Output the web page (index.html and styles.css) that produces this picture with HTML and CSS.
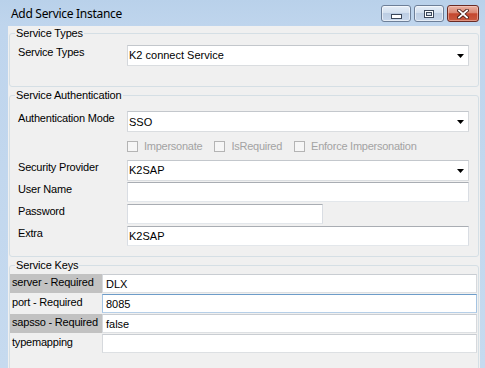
FILE: index.html
```html
<!DOCTYPE html>
<html>
<head>
<meta charset="utf-8">
<title>Add Service Instance</title>
<link rel="stylesheet" href="styles.css">
</head>
<body>
<div class="window">
  <div class="titlebar">
    <span class="title">Add Service Instance</span>
    <div class="caption-buttons">
      <span class="cbtn minbtn">
        <svg width="11" height="5" viewBox="0 0 11 5"><rect x="0.5" y="0.5" width="10" height="4" fill="#fff" stroke="#3b475a"/></svg>
      </span>
      <span class="cbtn maxbtn">
        <svg width="10" height="8" viewBox="0 0 10 8"><rect x="0.5" y="0.5" width="9" height="7" fill="#fff" stroke="#3b475a"/><rect x="2.5" y="2.5" width="5" height="3" fill="#d4dfec" stroke="#3b475a"/></svg>
      </span>
      <span class="cbtn closebtn">
        <svg width="12" height="10" viewBox="0 0 12 10"><path d="M2 1.5 L10 8.5 M10 1.5 L2 8.5" stroke="#4a1c16" stroke-width="3.6" stroke-linecap="square"/><path d="M2 1.5 L10 8.5 M10 1.5 L2 8.5" stroke="#fff" stroke-width="1.8" stroke-linecap="square"/></svg>
      </span>
    </div>
  </div>
  <div class="client">
    <fieldset class="group g1">
      <legend>Service Types</legend>
      <div class="gbody b1">
        <div class="row">
          <span class="lbl">Service Types</span>
          <div class="combo"><span class="val">K2 connect Service</span><svg class="arrow" width="7" height="4" viewBox="0 0 7 4"><path d="M0 0 H7 L3.5 4 Z" fill="#000"/></svg></div>
        </div>
      </div>
    </fieldset>

    <fieldset class="group g2">
      <legend>Service Authentication</legend>
      <div class="gbody b2">
        <div class="row">
          <span class="lbl">Authentication Mode</span>
          <div class="combo"><span class="val val-low">SSO</span><svg class="arrow" width="7" height="4" viewBox="0 0 7 4"><path d="M0 0 H7 L3.5 4 Z" fill="#000"/></svg></div>
        </div>
        <div class="checks">
          <span class="chk"><span class="box"></span><span class="ctext">Impersonate</span></span>
          <span class="chk"><span class="box"></span><span class="ctext">IsRequired</span></span>
          <span class="chk"><span class="box"></span><span class="ctext">Enforce Impersonation</span></span>
        </div>
        <div class="row r-sec">
          <span class="lbl">Security Provider</span>
          <div class="combo"><span class="val">K2SAP</span><svg class="arrow" width="7" height="4" viewBox="0 0 7 4"><path d="M0 0 H7 L3.5 4 Z" fill="#000"/></svg></div>
        </div>
        <div class="row r-user">
          <span class="lbl">User Name</span>
          <div class="tb"></div>
        </div>
        <div class="row r-pw">
          <span class="lbl">Password</span>
          <div class="tb tb-short"></div>
        </div>
        <div class="row r-extra">
          <span class="lbl">Extra</span>
          <div class="tb"><span class="val">K2SAP</span></div>
        </div>
      </div>
    </fieldset>

    <fieldset class="group g3">
      <legend>Service Keys</legend>
      <div class="gbody b3">
        <div class="keys">
          <span class="klbl shaded">server - Required</span>
          <div class="kin"><span>DLX</span></div>
          <span class="klbl">port - Required</span>
          <div class="kin focused"><span>8085</span></div>
          <span class="klbl shaded">sapsso - Required</span>
          <div class="kin"><span>false</span></div>
          <span class="klbl">typemapping</span>
          <div class="kin"><span></span></div>
        </div>
      </div>
    </fieldset>
  </div>
</div>
</body>
</html>
```

FILE: styles.css
```css
* { box-sizing: border-box; }
html, body { margin: 0; padding: 0; }
body {
  width: 485px;
  height: 368px;
  overflow: hidden;
  font-family: "Liberation Sans", Arial, sans-serif;
  font-size: 11px;
  color: #000;
  background: #c2d7ee;
}
.window {
  width: 485px;
  height: 368px;
  display: flex;
  flex-direction: column;
  overflow: hidden;
  background: linear-gradient(to bottom, #b9d1ea 0, #bfd5ed 26px, #c6daef 368px);
}
.titlebar {
  height: 26px;
  flex: none;
  display: flex;
  align-items: flex-start;
  padding: 0 6px 0 11px;
}
.title {
  flex: 1;
  font-family: "Noto Sans", "Open Sans", sans-serif;
  font-size: 12px;
  line-height: 16px;
  padding-top: 6px;
  letter-spacing: -0.3px;
  color: #000;
}
.caption-buttons {
  display: flex;
  gap: 3px;
  padding-top: 5px;
}
.cbtn {
  height: 17px;
  width: 30px;
  border-radius: 3px;
  display: flex;
  align-items: center;
  justify-content: center;
  border: 1px solid #6d7f98;
  background: linear-gradient(to bottom, #e6eef8 0%, #d3e0ef 45%, #bccde3 50%, #c7d7eb 100%);
  box-shadow: inset 0 0 0 1px rgba(255,255,255,0.55);
}
.minbtn svg { margin-top: 5px; }
.closebtn {
  width: 32px;
  border-color: #6a2b24;
  background: linear-gradient(to bottom, #eab1a2 0%, #d98672 45%, #c4472f 52%, #c95a40 100%);
  box-shadow: inset 0 0 0 1px rgba(255,220,210,0.45);
}

.client {
  flex: 1;
  margin-left: 8px;
  width: 472px;
  background: #f0f0f0;
  padding: 1px 1px 0 1px;
}
.group {
  margin: 0;
  padding: 0;
  min-width: 0;
  border: 1px solid #d5dfe5;
  border-radius: 3px;
}
.group legend {
  margin-left: 5px;
  padding: 0 1px;
  line-height: 13px;
  font-size: 11px;
  letter-spacing: -0.15px;
}
.g2, .g3 { margin-top: 2px; }

.b1 { padding: 5px 9px 20px 8px; }
.b2 { padding: 9px 9px 10px 8px; }
.b3 { padding: 2px 1px 40px 0; }

.row {
  display: grid;
  grid-template-columns: 109px 1fr;
  align-items: start;
}
.lbl {
  line-height: 13px;
  padding-top: 1px;
  letter-spacing: -0.2px;
  white-space: nowrap;
}
.combo {
  height: 21px;
  background: #fff;
  border: 1px solid;
  border-color: #c3c7cc #d4d7db #dadde0 #d4d7db;
  display: flex;
  align-items: center;
  padding: 0 4px 0 1px;
}
.combo .val { flex: 1; line-height: 13px; }
.combo .val-low { padding-top: 2px; }
.combo .arrow { flex: none; }

.checks {
  margin-top: 8px;
  margin-left: 109px;
  display: flex;
  gap: 12px;
  height: 12px;
  align-items: center;
}
.chk {
  display: flex;
  align-items: center;
  gap: 6px;
}
.box {
  width: 11px;
  height: 11px;
  border: 1px solid #b4b4b4;
  background: #f6f6f6;
}
.ctext {
  color: #a3a3a3;
  line-height: 13px;
  letter-spacing: -0.25px;
}

.r-sec { margin-top: 8px; }
.r-user { margin-top: 1px; }
.r-pw, .r-extra { margin-top: 2px; }

.tb {
  height: 20px;
  background: #fff;
  border: 1px solid;
  border-color: #a9adb3 #d9dde3 #e3e7eb #d9dde3;
  display: flex;
  align-items: center;
  padding: 0 1px;
}
.tb-short { width: 196px; }
.tb .val { line-height: 13px; padding-top: 1px; }

.keys {
  display: grid;
  grid-template-columns: 92px 1fr;
  grid-auto-rows: 19px;
  row-gap: 1px;
}
.klbl {
  line-height: 13px;
  padding: 2px 0 0 2px;
  letter-spacing: -0.2px;
  white-space: nowrap;
}
.klbl.shaded { background: #c2c2c2; }
.kin {
  background: #fff;
  border: 1px solid;
  border-color: #c9cdd2 #d6d9dd #dde0e3 #d6d9dd;
  display: flex;
  align-items: center;
  padding: 0 3px;
  line-height: 13px;
}
.kin span { padding-top: 2px; }
.kin.focused {
  border-color: #6d9cc9 #a5c4e2 #b6cfe8 #a5c4e2;
}
```
